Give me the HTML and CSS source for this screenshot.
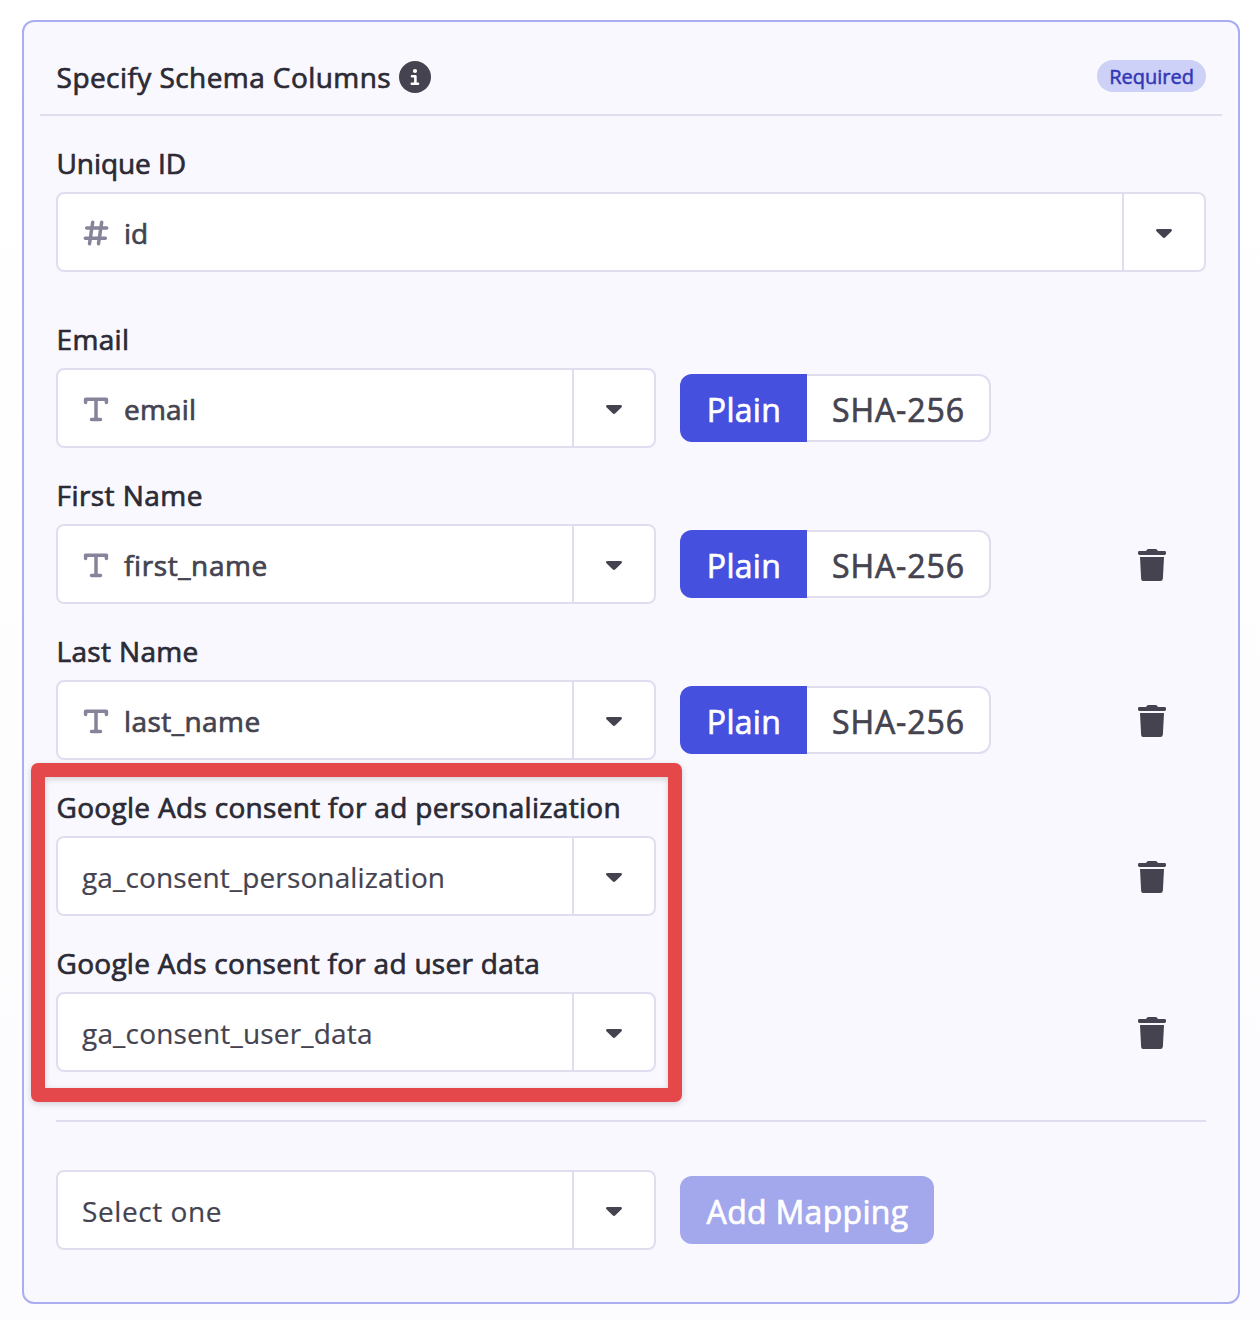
FILE: index.html
```html
<!DOCTYPE html>
<html lang="en">
<head>
<meta charset="utf-8">
<title>Specify Schema Columns</title>
<link rel="stylesheet" href="styles.css">
</head>
<body>
<svg class="sprite" aria-hidden="true">
  <symbol id="caret" viewBox="0 0 16 10"><path d="M1.6 0H14.4Q16 0 16 1.2Q16 1.8 15.3 2.5L9.4 8.2Q8 9.6 6.6 8.2L.7 2.5Q0 1.8 0 1.2Q0 0 1.6 0Z"/></symbol>
  <symbol id="hash" viewBox="0 0 26 26"><path d="M9.7 2.3 6.5 23.7M18.7 2.3 15.5 23.7M3.7 8H23.7M2.3 18.2H22.3" fill="none" stroke="currentColor" stroke-width="3.5" stroke-linecap="round"/></symbol>
  <symbol id="text" viewBox="0 0 26 26"><path d="M2.6 6.4V3.2H23.4V6.4M13 3.2V23.6M8.5 23.6H17.5" fill="none" stroke="currentColor" stroke-width="3.5" stroke-linecap="round" stroke-linejoin="round"/></symbol>
  <symbol id="trash" viewBox="0 0 28 32"><path d="M10.4 0H17.6Q18.6 0 19.4 1.2L20 2H26.6Q28 2 28 3.4V4.6Q28 6 26.6 6H1.4Q0 6 0 4.6V3.4Q0 2 1.4 2H8L8.6 1.2Q9.4 0 10.4 0ZM2 8H26L24.9 29.4Q24.7 32 22.2 32H5.8Q3.3 32 3.1 29.4Z"/></symbol>
</svg>
<main class="panel">
  <header class="panel-header">
    <h1 class="title"><span>Specify Schema Columns</span>
      <svg class="info" viewBox="0 0 32 32"><circle cx="16" cy="16" r="16"/><g class="info-mark"><circle cx="16" cy="10" r="2.1"/><path d="M13 15.2H16.4V22.6M12.8 22.8H19"/></g></svg>
    </h1>
    <span class="badge">Required</span>
  </header>
  <section class="fields">
    <div class="field field-wide">
      <label class="label l-unique">Unique ID</label>
      <div class="row"><div class="select"><div class="value"><svg class="type"><use href="#hash"/></svg><span class="v-id">id</span></div><div class="toggle"><svg class="caret"><use href="#caret"/></svg></div></div></div>
    </div>
    <div class="field">
      <label class="label l-email">Email</label>
      <div class="row"><div class="select"><div class="value"><svg class="type"><use href="#text"/></svg><span class="v-email">email</span></div><div class="toggle"><svg class="caret"><use href="#caret"/></svg></div></div>
        <div class="hashing"><button class="plain">Plain</button><button class="sha">SHA-256</button></div></div>
    </div>
    <div class="field">
      <label class="label l-first">First Name</label>
      <div class="row"><div class="select"><div class="value"><svg class="type"><use href="#text"/></svg><span class="v-first">first_name</span></div><div class="toggle"><svg class="caret"><use href="#caret"/></svg></div></div>
        <div class="hashing"><button class="plain">Plain</button><button class="sha">SHA-256</button></div>
        <svg class="trash"><use href="#trash"/></svg></div>
    </div>
    <div class="field">
      <label class="label l-last">Last Name</label>
      <div class="row"><div class="select"><div class="value"><svg class="type"><use href="#text"/></svg><span class="v-last">last_name</span></div><div class="toggle"><svg class="caret"><use href="#caret"/></svg></div></div>
        <div class="hashing"><button class="plain">Plain</button><button class="sha">SHA-256</button></div>
        <svg class="trash"><use href="#trash"/></svg></div>
    </div>
    <div class="field">
      <label class="label l-pers">Google Ads consent for ad personalization</label>
      <div class="row"><div class="select"><div class="value regular"><span class="v-pers">ga_consent_personalization</span></div><div class="toggle"><svg class="caret"><use href="#caret"/></svg></div></div>
        <svg class="trash"><use href="#trash"/></svg></div>
    </div>
    <div class="field">
      <label class="label l-user">Google Ads consent for ad user data</label>
      <div class="row"><div class="select"><div class="value regular"><span class="v-user">ga_consent_user_data</span></div><div class="toggle"><svg class="caret"><use href="#caret"/></svg></div></div>
        <svg class="trash"><use href="#trash"/></svg></div>
    </div>
  </section>
  <footer class="add row">
    <div class="select"><div class="value regular"><span class="v-one">Select one</span></div><div class="toggle"><svg class="caret"><use href="#caret"/></svg></div></div>
    <button class="add-button">Add Mapping</button>
  </footer>
  <div class="highlight"></div>
</main>
</body>
</html>
```
FILE: styles.css
```css
* { box-sizing: border-box; }
body {
  margin: 0;
  padding: 20px 20px 16px 22px;
  background: linear-gradient(#fff, #fcfcfe 1320px);
  color: #2b2a35;
  font-family: "Open Sans", "Noto Sans", sans-serif;
  font-size: 28px;
}
.sprite { position: absolute; width: 0; height: 0; }
.panel {
  position: relative;
  height: 1284px;
  padding: 0 16px;
  background: #f9f8fe;
  border: 2px solid #aaadf2;
  border-radius: 12px;
}
.panel-header {
  display: flex;
  justify-content: space-between;
  align-items: flex-start;
  height: 94px;
  padding: 37px 16px 0;
  border-bottom: 2px solid #e0deee;
}

/* A thin outline gives a medium weight between regular and semibold. */
.title, .label, .value, button { -webkit-text-stroke: .7px currentColor; }

.title {
  display: flex;
  gap: 8px;
  margin: 0;
  font-size: 28px;
  font-weight: 400;
  letter-spacing: .43px;
  line-height: 36px;
}
.title span { padding-left: .6px; }
.info { width: 32px; height: 32px; margin-top: 2px; fill: #44434f; }
.info-mark { fill: #fff; }
.info-mark path { fill: none; stroke: #fff; stroke-width: 2.6; stroke-linecap: round; stroke-linejoin: round; }
.badge {
  height: 32px;
  margin-top: 1px;
  padding: 0 12px;
  border-radius: 16px;
  background: #cdd0f7;
  color: #3137b5;
  font-size: 20px;
  line-height: 33px;
  -webkit-text-stroke: .5px currentColor;
}
.fields {
  display: flex;
  flex-direction: column;
  gap: 29px;
  margin: 0 16px;
  padding: 29px 0 48px;
  border-bottom: 2px solid #e0deee;
}
.field-wide { margin-bottom: 20px; }
.field-wide .select { width: 100%; }
.label {
  display: block;
  margin-bottom: 11px;
  padding-left: .5px;
  line-height: 36px;
  white-space: nowrap;
}
.l-unique { letter-spacing: -.08px; }
.l-email { letter-spacing: .35px; }
.l-first { letter-spacing: .45px; }
.l-last { letter-spacing: .34px; }
.l-pers { letter-spacing: .31px; }
.l-user { letter-spacing: .28px; }
.v-email { letter-spacing: .2px; }
.v-first { letter-spacing: .6px; }
.v-last { letter-spacing: .45px; }
.v-pers { letter-spacing: .12px; }
.v-user { letter-spacing: .18px; }
.v-one { letter-spacing: .58px; }
.row { display: flex; align-items: center; gap: 24px; }
.select {
  display: flex;
  width: 600px;
  height: 80px;
  border: 2px solid #e0deee;
  border-radius: 8px;
  background: #fff;
}
.value {
  display: flex;
  flex: 1;
  align-items: center;
  gap: 15px;
  padding: 2px 0 0 25px;
  color: #44434f;
  white-space: nowrap;
}
.value.regular { padding-left: 24px; -webkit-text-stroke-width: .2px; }
.type { width: 26px; height: 26px; margin-top: -1px; color: #86839a; }
.toggle {
  display: flex;
  align-items: center;
  justify-content: center;
  width: 82px;
  border-left: 2px solid #e0deee;
}
.caret { width: 16px; height: 10px; margin-top: 3px; fill: #44434f; }
button {
  padding: 3px 0 0 1px;
  border: 0;
  font: 400 32px/65px "Open Sans", "Noto Sans", sans-serif;
  letter-spacing: .3px;
  white-space: nowrap;
}
.hashing { display: flex; width: 311px; height: 68px; }
.plain { width: 127px; border-radius: 12px 0 0 12px; background: #4550de; color: #fff; }
.sha {
  flex: 1;
  border: 2px solid #e0deee;
  border-left: 0;
  border-radius: 0 12px 12px 0;
  background: #fff;
  color: #44434f;
  letter-spacing: .95px;
  line-height: 61px;
}
.trash { width: 28px; height: 32px; margin: 2px 40px 0 auto; fill: #44434f; }
.add { margin: 48px 16px 0; }
.add-button { width: 254px; height: 68px; border-radius: 12px; background: #a3a7ec; color: #fff; }
.highlight {
  position: absolute;
  left: 7px;
  top: 741px;
  width: 651px;
  height: 339px;
  border: 14px solid #e5484b;
  border-radius: 7px;
  box-shadow: 0 2px 6px rgba(0, 0, 0, .16), inset 0 2px 6px rgba(0, 0, 0, .16);
}
```
